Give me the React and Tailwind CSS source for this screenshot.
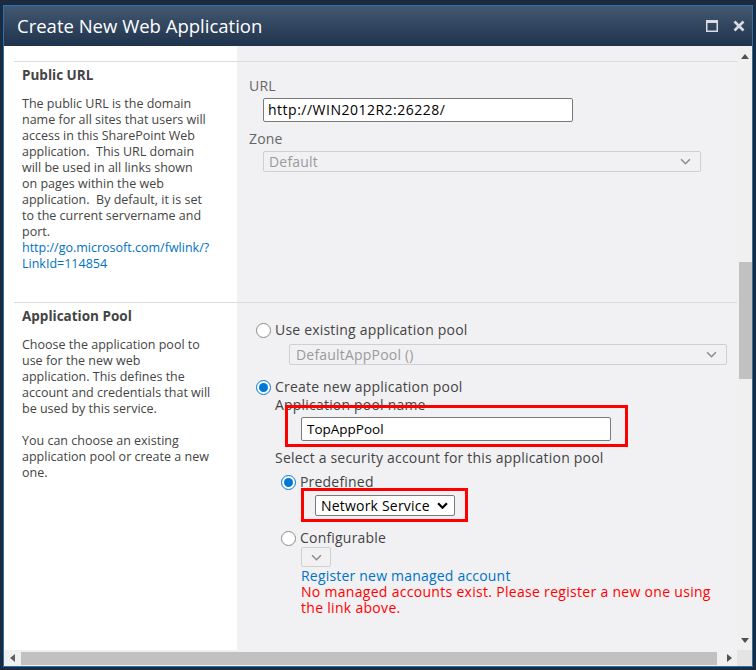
import React from "react";

/* ---------- small drawings ---------- */
const Chevron = ({ className, width = 1.4 }) => (
  <svg viewBox="0 0 10 6" className={className} fill="none" stroke="currentColor" strokeWidth={width}>
    <path d="M1 1l4 4 4-4" />
  </svg>
);

const Radio = ({ checked }) =>
  checked ? (
    <span className="w-[15px] h-[15px] rounded-full border border-[#0078d7] bg-white flex items-center justify-center shrink-0">
      <span className="w-[9px] h-[9px] rounded-full bg-[#0078d7]" />
    </span>
  ) : (
    <span className="w-[15px] h-[15px] rounded-full border border-[#8a8a8a] bg-white shrink-0" />
  );

const DisabledSelect = ({ text, className }) => (
  <div className={className}>
    <span>{text}</span>
    <Chevron className="w-[11px] h-[7px] text-[#8c8c8c]" />
  </div>
);

const publicUrlText = [
  "The public URL is the domain",
  "name for all sites that users will",
  "access in this SharePoint Web",
  "application.  This URL domain",
  "will be used in all links shown",
  "on pages within the web",
  "application.  By default, it is set",
  "to the current servername and",
  "port.",
];

const poolText = [
  "Choose the application pool to",
  "use for the new web",
  "application. This defines the",
  "account and credentials that will",
  "be used by this service.",
  " ",
  "You can choose an existing",
  "application pool or create a new",
  "one.",
];

const Lines = ({ lines }) => (
  <div className="text-[12.5px] leading-[16px] text-[#444]">
    {lines.map((l, i) => (
      <div key={i} className="whitespace-pre h-[16px]">
        {l}
      </div>
    ))}
  </div>
);

/* ---------- title bar ---------- */
const TitleBar = () => (
  <div className="h-[40px] shrink-0 flex items-center justify-between pl-[13px] pr-[7px] bg-gradient-to-b from-[#435872] to-[#20334c]">
    <span className="text-white text-[18.5px] leading-none">Create New Web Application</span>
    <div className="flex items-center gap-[15px]">
      <svg viewBox="0 0 12 12" className="w-[12px] h-[12px]">
        <rect x="0.75" y="0.75" width="10.5" height="10.5" fill="none" stroke="#d9dde2" strokeWidth="1.5" />
        <rect x="0" y="0" width="12" height="3" fill="#d9dde2" />
      </svg>
      <svg viewBox="0 0 12 12" className="w-[12px] h-[12px]">
        <path d="M1.5 1.5l9 9M10.5 1.5l-9 9" stroke="#d9dde2" strokeWidth="2.6" />
      </svg>
    </div>
  </div>
);

/* ---------- scrollbars ---------- */
const VScroll = () => (
  <div className="w-[15px] shrink-0 bg-[#f0f0f0] flex flex-col items-center">
    <svg viewBox="0 0 8 5" className="w-[8px] h-[5px] mt-[8px] shrink-0">
      <path d="M0 5L4 0l4 5z" fill="#505050" />
    </svg>
    <div className="w-[13px] ml-[2px] h-[117px] mt-[203px] bg-[#c1c1c1] shrink-0" />
    <div className="flex-1" />
    <svg viewBox="0 0 8 5" className="w-[8px] h-[5px] mb-[7px] shrink-0">
      <path d="M0 0L4 5l4-5z" fill="#505050" />
    </svg>
  </div>
);

const HScroll = () => (
  <div className="h-[16px] shrink-0 flex bg-[#f0f0f0]">
    <div className="w-[733px] flex items-center">
      <svg viewBox="0 0 5 8" className="w-[5px] h-[8px] ml-[6px] shrink-0">
        <path d="M5 0L0 4l5 4z" fill="#606060" />
      </svg>
      <div className="h-[13px] mt-[2px] ml-[6px] w-[696px] bg-[#c1c1c1] self-start" />
      <svg viewBox="0 0 5 8" className="w-[5px] h-[8px] ml-[10px] shrink-0">
        <path d="M0 0l5 4-5 4z" fill="#505050" />
      </svg>
    </div>
    <div className="flex-1 bg-[#e4e4e4]" />
  </div>
);

/* ---------- sections ---------- */
const PublicUrlRight = () => (
  <div className="pl-[12px] pt-[16px] text-[14px] leading-[16px] tracking-[0.2px]">
    <div className="text-[#666]">URL</div>
    <div className="ml-[14px] mt-[4px] w-[310px] h-[24px] bg-white border border-[#7a7a7a] rounded-[2px] flex items-center pl-[4px] text-black tracking-[0.5px]">
      http://WIN2012R2:26228/
    </div>
    <div className="text-[#666] mt-[9px]">Zone</div>
    <DisabledSelect
      text="Default"
      className="ml-[14px] mt-[4px] w-[438px] h-[21px] border border-[#cfcfd2] rounded-[2px] flex items-center justify-between pl-[5px] pr-[9px] text-[#9a9a9a]"
    />
  </div>
);

const PoolRight = () => (
  <div className="pl-[19px] pt-[19px] text-[14px] leading-[16px] tracking-[0.2px] text-[#444]">
    <div className="flex items-center gap-[4px] h-[16px]">
      <Radio />
      <span>Use existing application pool</span>
    </div>
    <DisabledSelect
      text="DefaultAppPool ()"
      className="ml-[33px] mt-[6px] w-[438px] h-[21px] border border-[#cfcfd2] rounded-[2px] flex items-center justify-between pl-[6px] pr-[9px] text-[#9a9a9a]"
    />
    <div className="flex items-center gap-[4px] h-[16px] mt-[14px]">
      <Radio checked />
      <span>Create new application pool</span>
    </div>
    <div className="ml-[19px] mt-[2px]">Application pool name</div>
    <div className="ml-[45px] mt-[4px] w-[310px] h-[24px] bg-white border border-[#7a7a7a] rounded-[2px] flex items-center pl-[5px] text-black text-[13.5px] tracking-normal">
      TopAppPool
    </div>
    <div className="ml-[19px] mt-[9px]">Select a security account for this application pool</div>
    <div className="ml-[25px] mt-[8px] flex items-center gap-[4px] h-[16px]">
      <Radio checked />
      <span>Predefined</span>
    </div>
    <div className="ml-[59px] mt-[5px] w-[140px] h-[21px] bg-white border border-[#7a7a7a] rounded-[2px] flex items-center gap-[7px] pl-[5px] text-black">
      <span>Network Service</span>
      <Chevron className="w-[11px] h-[7px] text-black" width={2} />
    </div>
    <div className="ml-[25px] mt-[14px] flex items-center gap-[4px] h-[16px]">
      <Radio />
      <span>Configurable</span>
    </div>
    <div className="ml-[45px] mt-[1px] w-[30px] h-[20px] border border-[#cfcfd2] rounded-[2px] flex items-center justify-center">
      <Chevron className="w-[11px] h-[7px] text-[#8c8c8c]" />
    </div>
    <div className="ml-[45px] mt-[1px] text-[#0072c6]">Register new managed account</div>
    <div className="ml-[45px] text-[#ff0000] tracking-[0.3px]">
      <div>No managed accounts exist. Please register a new one using</div>
      <div>the link above.</div>
    </div>
  </div>
);

const App = () => {
  return (
    <div className="relative w-[756px] h-[670px] bg-[#1c2a3b] pt-[5px] px-[3px] pb-[3px] font-['Open_Sans',sans-serif]">
      <div className="h-full border border-[#2274b9] flex flex-col">
        <TitleBar />

        <div className="flex h-[604px] shrink-0">
          <div className="flex-1 flex flex-col overflow-hidden">
            <div className="flex h-[15px] shrink-0">
              <div className="w-[233px] bg-white" />
              <div className="flex-1 bg-[#f1f1f3]" />
            </div>

            {/* Public URL */}
            <div className="flex h-[241px] shrink-0">
              <div className="w-[233px] bg-white pl-[10px]">
                <div className="h-full border-t border-[#dcdcdc] pl-[8px] pt-[5px]">
                  <div className="text-[13.5px] leading-[16px] font-bold text-[#444]">Public URL</div>
                  <div className="mt-[13px]">
                    <Lines lines={publicUrlText} />
                    <div className="text-[12.5px] leading-[16px] text-[#0072c6]">
                      <div>http://go.microsoft.com/fwlink/?</div>
                      <div>LinkId=114854</div>
                    </div>
                  </div>
                </div>
              </div>
              <div className="flex-1 bg-[#f1f1f3]">
                <div className="h-full border-t border-[#dcdcdc]">
                  <PublicUrlRight />
                </div>
              </div>
            </div>

            {/* Application Pool */}
            <div className="flex flex-1">
              <div className="w-[233px] bg-white pl-[10px]">
                <div className="h-full border-t border-[#dcdcdc] pl-[8px] pt-[5px]">
                  <div className="text-[13.5px] leading-[16px] font-bold text-[#444]">Application Pool</div>
                  <div className="mt-[13px]">
                    <Lines lines={poolText} />
                  </div>
                </div>
              </div>
              <div className="flex-1 bg-[#f1f1f3]">
                <div className="h-full border-t border-[#dcdcdc]">
                  <PoolRight />
                </div>
              </div>
            </div>
          </div>

          <VScroll />
        </div>

        <HScroll />
      </div>

      {/* annotation boxes */}
      <div className="absolute left-[285px] top-[405px] w-[343px] h-[42px] border-[3px] border-[#ff0000]" />
      <div className="absolute left-[301px] top-[488px] w-[167px] h-[34px] border-[3px] border-[#ff0000]" />
    </div>
  );
};

export default App;
